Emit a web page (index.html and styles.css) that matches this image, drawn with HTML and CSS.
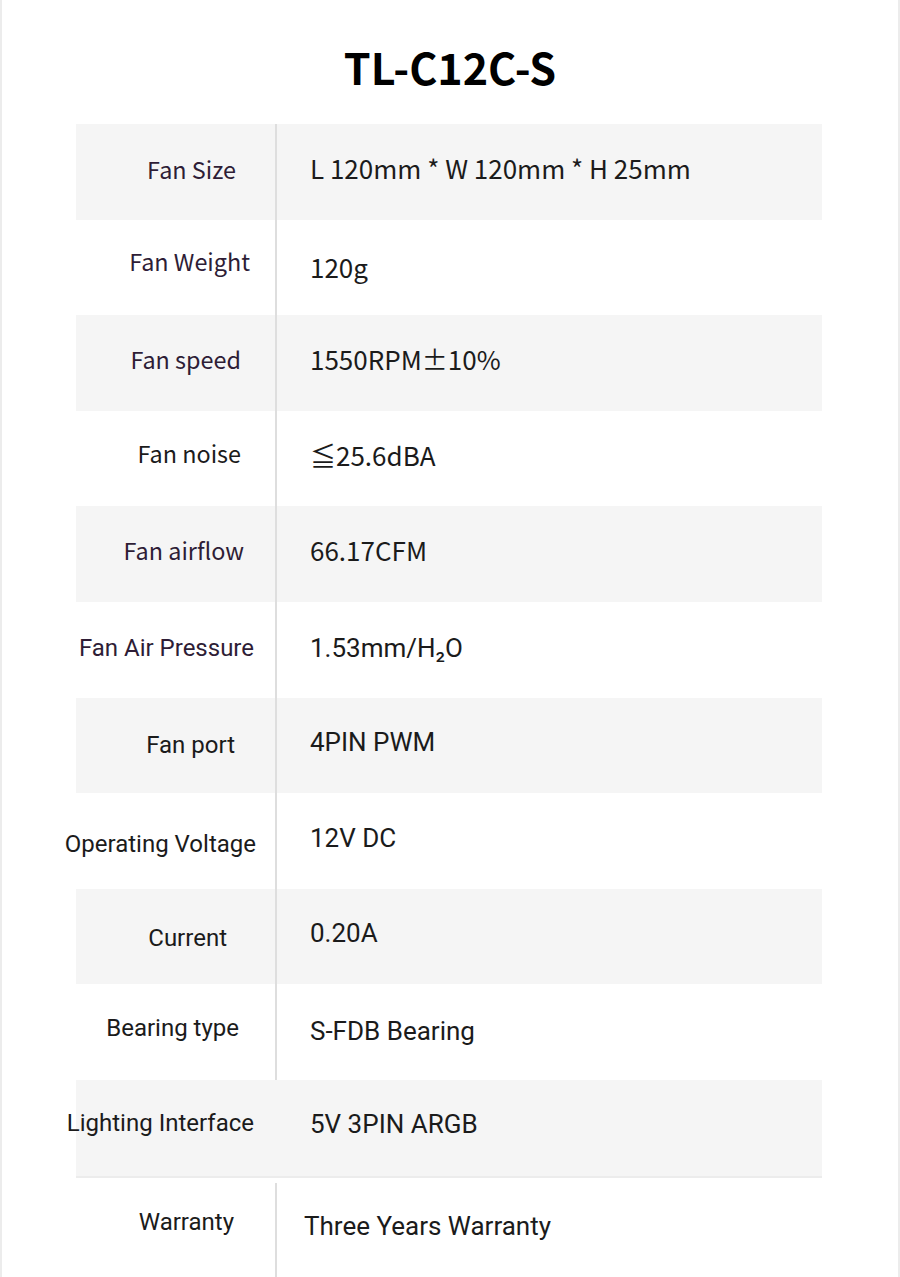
FILE: index.html
```html
<!DOCTYPE html>
<html lang="en">
<head>
<meta charset="utf-8">
<title>TL-C12C-S</title>
<link rel="stylesheet" href="styles.css">
</head>
<body>
<div class="page">
  <h1 class="title">TL-C12C-S</h1>
  <div class="specs">
    <div class="row shade cjk r1">
      <div class="label purple">Fan Size</div>
      <div class="value">L 120mm * W 120mm * H 25mm</div>
    </div>
    <div class="row cjk r2">
      <div class="label purple">Fan Weight</div>
      <div class="value">120g</div>
    </div>
    <div class="row shade cjk r3">
      <div class="label purple">Fan speed</div>
      <div class="value">1550RPM±10%</div>
    </div>
    <div class="row cjk r4">
      <div class="label">Fan noise</div>
      <div class="value">≦25.6dBA</div>
    </div>
    <div class="row shade cjk r5">
      <div class="label purple">Fan airflow</div>
      <div class="value">66.17CFM</div>
    </div>
    <div class="row rob r6">
      <div class="label purple">Fan Air Pressure</div>
      <div class="value">1.53mm/H₂O</div>
    </div>
    <div class="row shade rob r7">
      <div class="label">Fan port</div>
      <div class="value">4PIN PWM</div>
    </div>
    <div class="row rob r8">
      <div class="label">Operating Voltage</div>
      <div class="value">12V DC</div>
    </div>
    <div class="row shade rob r9">
      <div class="label">Current</div>
      <div class="value">0.20A</div>
    </div>
    <div class="row rob r10">
      <div class="label">Bearing type</div>
      <div class="value">S-FDB Bearing</div>
    </div>
    <div class="row shade rob nodiv r11">
      <div class="label">Lighting Interface</div>
      <div class="value">5V 3PIN ARGB</div>
    </div>
    <div class="row rob last r12">
      <div class="label">Warranty</div>
      <div class="value">Three Years Warranty</div>
    </div>
  </div>
</div>
</body>
</html>
```

FILE: styles.css
```css
html, body {
  margin: 0;
  padding: 0;
  background: #ffffff;
}

.page {
  width: 900px;
  height: 1277px;
  box-sizing: border-box;
  border-left: 2px solid #ececec;
  border-right: 2px solid #ececec;
  overflow: hidden;
  font-family: Roboto, "Liberation Sans", sans-serif;
  color: #1b1b1b;
}

.title {
  margin: 0;
  padding-top: 40px;
  height: 124px;
  box-sizing: border-box;
  text-align: center;
  font-family: "Noto Sans CJK SC", "Noto Sans", sans-serif;
  font-weight: 700;
  font-size: 43px;
  line-height: 52px;
  color: #000;
}

.specs {
  display: flex;
  flex-direction: column;
  margin-left: 74px;
  width: 746px;
}

.row {
  display: grid;
  grid-template-columns: 199px 2px 1fr;
  height: 95.6px;
  align-items: center;
}

.row::before {
  content: "";
  grid-column: 2;
  grid-row: 1;
  align-self: stretch;
  background: #dedede;
}

.row.nodiv::before {
  background: transparent;
}

.row.last {
  height: 101px;
  border-top: 2px solid #ececec;
  box-sizing: border-box;
}

.row.last::before {
  margin-top: 5px;
}

.shade {
  background: #f5f5f5;
}

.label {
  grid-column: 1;
  grid-row: 1;
  display: flex;
  justify-content: flex-end;
  white-space: nowrap;
  font-size: 24px;
}

.value {
  grid-column: 3;
  grid-row: 1;
  white-space: nowrap;
  font-size: 26px;
  padding-left: 33px;
}

.cjk .label,
.cjk .value {
  font-family: "Noto Sans CJK SC", "Noto Sans", sans-serif;
}

.cjk .label {
  font-size: 23.4px;
}

.purple {
  color: #2e1d36;
}

/* per-row offsets, matching the source artwork */
.r1 .label { padding-right: 39px; margin-top: -6px; }
.r2 .label { padding-right: 25px; margin-top: -12px; }
.r3 .label { padding-right: 34px; margin-top: -8px; }
.r4 .label { padding-right: 34px; margin-top: -12px; }
.r5 .label { padding-right: 31px; margin-top: -8px; }
.r6 .label { padding-right: 21px; margin-top: -4px; }
.r7 .label { padding-right: 40px; }
.r8 .label { padding-right: 19px; margin-top: 6px; }
.r9 .label { padding-right: 48px; margin-top: 2px; }
.r10 .label { padding-right: 36px; margin-top: -8px; }
.r11 .label { padding-right: 21px; margin-top: -10px; }
.r12 .label { padding-right: 41px; margin-top: -10px; }

.r1 .value { margin-top: -8px; }
.r2 .value { margin-top: -2px; }
.r3 .value { margin-top: -8px; }
.r4 .value { margin-top: -8px; }
.r5 .value { margin-top: -10px; }
.r6 .value { margin-top: -4px; }
.r7 .value { margin-top: -6px; }
.r8 .value { margin-top: -6px; }
.r9 .value { margin-top: -8px; }
.r10 .value { margin-top: -2px; }
.r11 .value { margin-top: -8px; }
.r12 .value { padding-left: 27px; margin-top: -2px; }
```
